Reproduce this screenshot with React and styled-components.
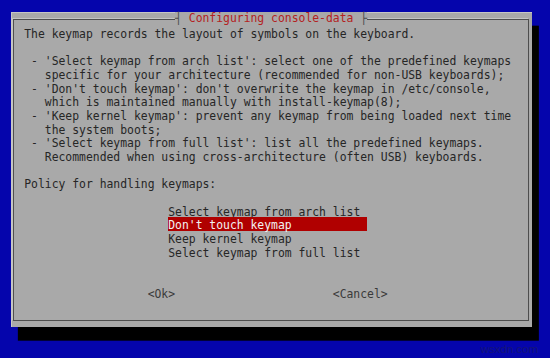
import React from "react";
import styled, { createGlobalStyle } from "styled-components";

const ROW = 13.68;

const GlobalStyle = createGlobalStyle`
  html, body {
    margin: 0;
    padding: 0;
    background: #0000aa;
  }
`;

const Screen = styled.div`
  position: relative;
  width: 550px;
  height: 358px;
  box-sizing: border-box;
  padding: 12.3px 0 0 10.5px;
  overflow: hidden;
  background: #0505ac;
  font-family: "DejaVu Sans Mono", "Liberation Mono", monospace;
  font-size: 11.4px;
`;

const Dialog = styled.div`
  position: relative;
  width: 76ch;
  height: ${ROW * 23}px;
  display: flex;
  flex-direction: column;
  background: #a9a9a9;
  box-shadow: inset 1px 1px 0 #c6c6c6, 1ch ${ROW}px 0 #000;
`;

const Frame = styled.div`
  position: absolute;
  top: ${ROW / 2 - 0.5}px;
  bottom: ${ROW / 2 - 0.5}px;
  left: calc(0.5ch - 0.5px);
  right: calc(0.5ch - 0.5px);
  border: 1px solid #4e4e4e;
  box-shadow: -1px -1px 0 #c4c4c4;
  pointer-events: none;
`;

const Row = styled.div`
  height: ${ROW}px;
  line-height: ${ROW + 2.4}px;
  padding-left: 2ch;
  white-space: pre;
  color: #262626;
`;

const TitleRow = styled.div`
  height: ${ROW}px;
  line-height: ${ROW}px;
  display: flex;
  justify-content: center;
  white-space: pre;
`;

const Title = styled.span`
  position: relative;
  background: #a9a9a9;
  color: #b42222;
`;

const Cap = styled.span`
  color: #4e4e4e;
`;

const MenuItem = styled.div`
  height: ${ROW}px;
  line-height: ${ROW + 2.4}px;
  margin-left: 23ch;
  width: 29ch;
  white-space: pre;
  color: ${(p) => (p.$active ? "#f2f2f2" : "#262626")};
  background: ${(p) => (p.$active ? "#b00000" : "transparent")};
`;

const ButtonRow = styled.div`
  height: ${ROW}px;
  line-height: ${ROW + 2.4}px;
  display: flex;
  gap: 23ch;
  padding-left: 20ch;
  color: #3a3a3a;
  white-space: pre;
`;

const Watermark = styled.div`
  position: absolute;
  right: 12px;
  bottom: 3px;
  font-family: "Liberation Sans", Arial, sans-serif;
  font-size: 11.5px;
  color: #14147a;
`;

const text = [
  "The keymap records the layout of symbols on the keyboard.",
  "",
  " - 'Select keymap from arch list': select one of the predefined keymaps",
  "   specific for your architecture (recommended for non-USB keyboards);",
  " - 'Don't touch keymap': don't overwrite the keymap in /etc/console,",
  "   which is maintained manually with install-keymap(8);",
  " - 'Keep kernel keymap': prevent any keymap from being loaded next time",
  "   the system boots;",
  " - 'Select keymap from full list': list all the predefined keymaps.",
  "   Recommended when using cross-architecture (often USB) keyboards.",
  "",
  "Policy for handling keymaps:",
  "",
];

const choices = [
  "Select keymap from arch list",
  "Don't touch keymap",
  "Keep kernel keymap",
  "Select keymap from full list",
];

export default function App() {
  return (
    <>
      <GlobalStyle />
      <Screen>
        <Dialog>
          <Frame />
          <TitleRow>
            <Title>
              <Cap>┤</Cap> Configuring console-data <Cap>├</Cap>
            </Title>
          </TitleRow>
          {text.map((line, i) => (
            <Row key={i}>{line}</Row>
          ))}
          {choices.map((c, i) => (
            <MenuItem key={c} $active={i === 1}>
              {c}
            </MenuItem>
          ))}
          <Row />
          <Row />
          <ButtonRow>
            <span>&lt;Ok&gt;</span>
            <span>&lt;Cancel&gt;</span>
          </ButtonRow>
        </Dialog>
        <Watermark>wsxdn.com</Watermark>
      </Screen>
    </>
  );
}
